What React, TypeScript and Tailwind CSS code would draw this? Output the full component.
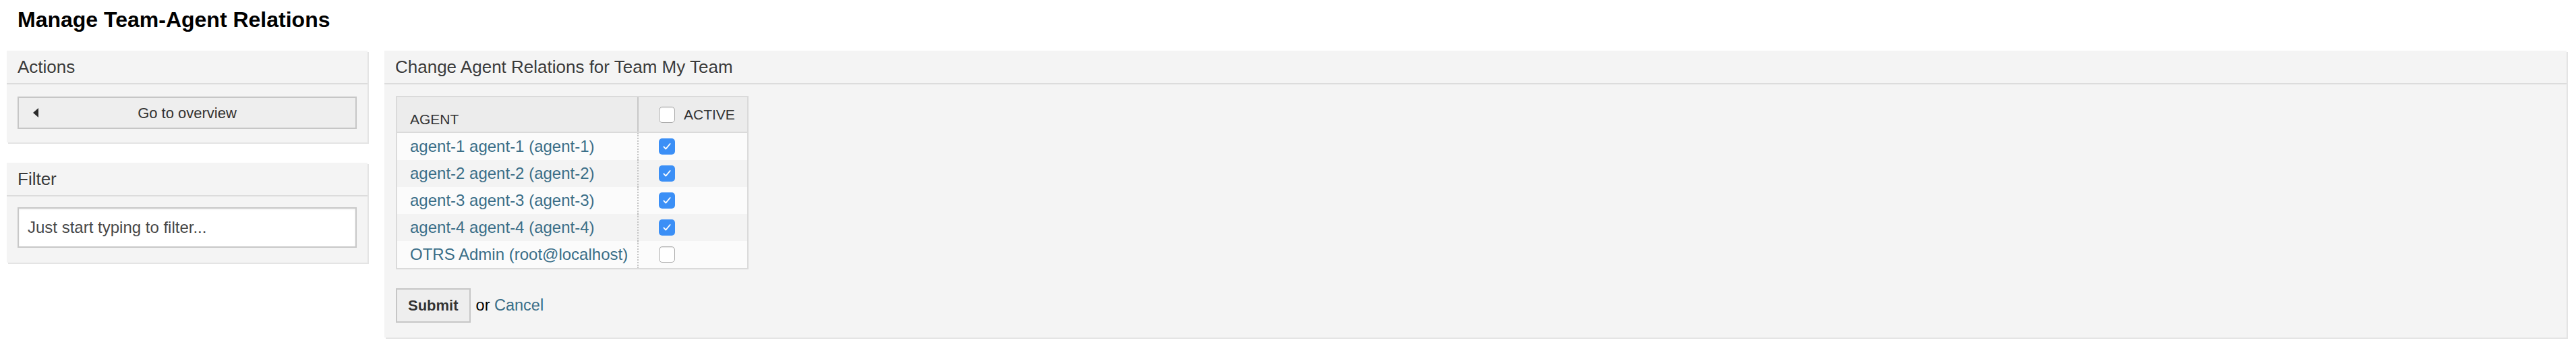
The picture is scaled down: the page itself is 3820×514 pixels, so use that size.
import React from 'react';

const agents = [
  { label: 'agent-1 agent-1 (agent-1)', active: true },
  { label: 'agent-2 agent-2 (agent-2)', active: true },
  { label: 'agent-3 agent-3 (agent-3)', active: true },
  { label: 'agent-4 agent-4 (agent-4)', active: true },
  { label: 'OTRS Admin (root@localhost)', active: false },
];

function Checkbox({ checked }: { checked: boolean }) {
  if (checked) {
    return (
      <span className="flex h-[24px] w-[24px] items-center justify-center rounded-[5px] bg-[#3b8ff6]">
        <svg viewBox="0 0 24 24" className="h-[16px] w-[16px]" fill="none" stroke="#ffffff" strokeWidth="2.6" strokeLinecap="round" strokeLinejoin="round">
          <path d="M5 12.5l4.5 5L19 6" />
        </svg>
      </span>
    );
  }
  return (
    <span className="block h-[24px] w-[24px] rounded-[5px] border border-[#a9a9a9] bg-white shadow-[inset_0_1px_1px_rgba(0,0,0,0.1)]" />
  );
}

function BoxHeader({ children }: { children: React.ReactNode }) {
  return (
    <div className="flex h-[50px] items-center border-b-2 border-[#dcdcdc] px-[16px] text-[26px] text-[#3a3a3a] [text-shadow:0_1px_0_#ffffff]">
      {children}
    </div>
  );
}

export default function App() {
  return (
    <div className="min-h-[514px] bg-white pl-[10px] pr-[14px] font-['Liberation_Sans',Arial,sans-serif]">
      <h1 className="ml-[16px] pt-[11px] text-[32px] font-bold leading-[36px] text-black">
        Manage Team-Agent Relations
      </h1>

      <div className="mt-[28px] flex items-start gap-[25px]">
        {/* sidebar */}
        <div className="flex w-[535px] shrink-0 flex-col gap-[30px]">
          <div className="bg-[#f4f4f4] shadow-[2px_2px_0_#e4e4e4]">
            <BoxHeader>Actions</BoxHeader>
            <div className="px-[16px] pb-[20px] pt-[18px]">
              <button className="relative flex h-[48px] w-full items-center justify-center border-2 border-[#c6c6c6] bg-[#eeeeee] text-[22px] text-[#333333]">
                <span className="absolute left-[21px] top-1/2 h-0 w-0 -translate-y-1/2 border-y-[7.5px] border-r-[8px] border-y-transparent border-r-[#2b2b2b]" />
                Go to overview
              </button>
            </div>
          </div>

          <div className="bg-[#f4f4f4] shadow-[2px_2px_0_#e4e4e4]">
            <BoxHeader>Filter</BoxHeader>
            <div className="px-[16px] pb-[22px] pt-[16px]">
              <input
                type="text"
                placeholder="Just start typing to filter..."
                className="h-[60px] w-full border-2 border-[#c8c8c8] bg-white px-[13px] text-[24px] text-[#444444] shadow-[inset_0_1px_3px_rgba(0,0,0,0.08)] outline-none placeholder:text-[#484848]"
              />
            </div>
          </div>
        </div>

        {/* main panel */}
        <div className="min-w-0 flex-1 bg-[#f4f4f4] shadow-[2px_2px_0_#e4e4e4]">
          <BoxHeader>Change Agent Relations for Team My Team</BoxHeader>
          <div className="px-[17px] pb-[22px] pt-[17px]">
            <div className="w-[523px] border-2 border-[#dadada]">
              <div className="grid h-[53px] grid-cols-[356px_1fr] border-b-2 border-[#dadada] bg-[#ececec] text-[21px] text-[#333333]">
                <div className="flex items-end pb-[3px] pl-[19px]">AGENT</div>
                <div className="flex items-center gap-[13px] border-l-2 border-[#c8c8c8] pl-[30px]">
                  <Checkbox checked={false} />
                  <span>ACTIVE</span>
                </div>
              </div>
              {agents.map((a, i) => (
                <div
                  key={a.label}
                  className={
                    'grid h-[40px] grid-cols-[356px_1fr] text-[24px] ' +
                    (i % 2 === 0 ? 'bg-[#fbfbfb]' : 'bg-[#f3f3f3]')
                  }
                >
                  <div className="flex items-center whitespace-nowrap pl-[19px] text-[#3a6e88]">{a.label}</div>
                  <div className="flex items-center border-l-2 border-dotted border-[#c4c4c4] pl-[30px]">
                    <Checkbox checked={a.active} />
                  </div>
                </div>
              ))}
            </div>

            <div className="mt-[28px] flex items-center">
              <button className="h-[51px] border-2 border-[#c6c6c6] bg-[#eeeeee] px-[16px] text-[22px] font-bold text-[#333333] [text-shadow:0_1px_0_#ffffff]">
                Submit
              </button>
              <span className="ml-[8px] text-[23.5px] text-black">
                or <a href="#" className="text-[#3a6e88]">Cancel</a>
              </span>
            </div>
          </div>
        </div>
      </div>
    </div>
  );
}
